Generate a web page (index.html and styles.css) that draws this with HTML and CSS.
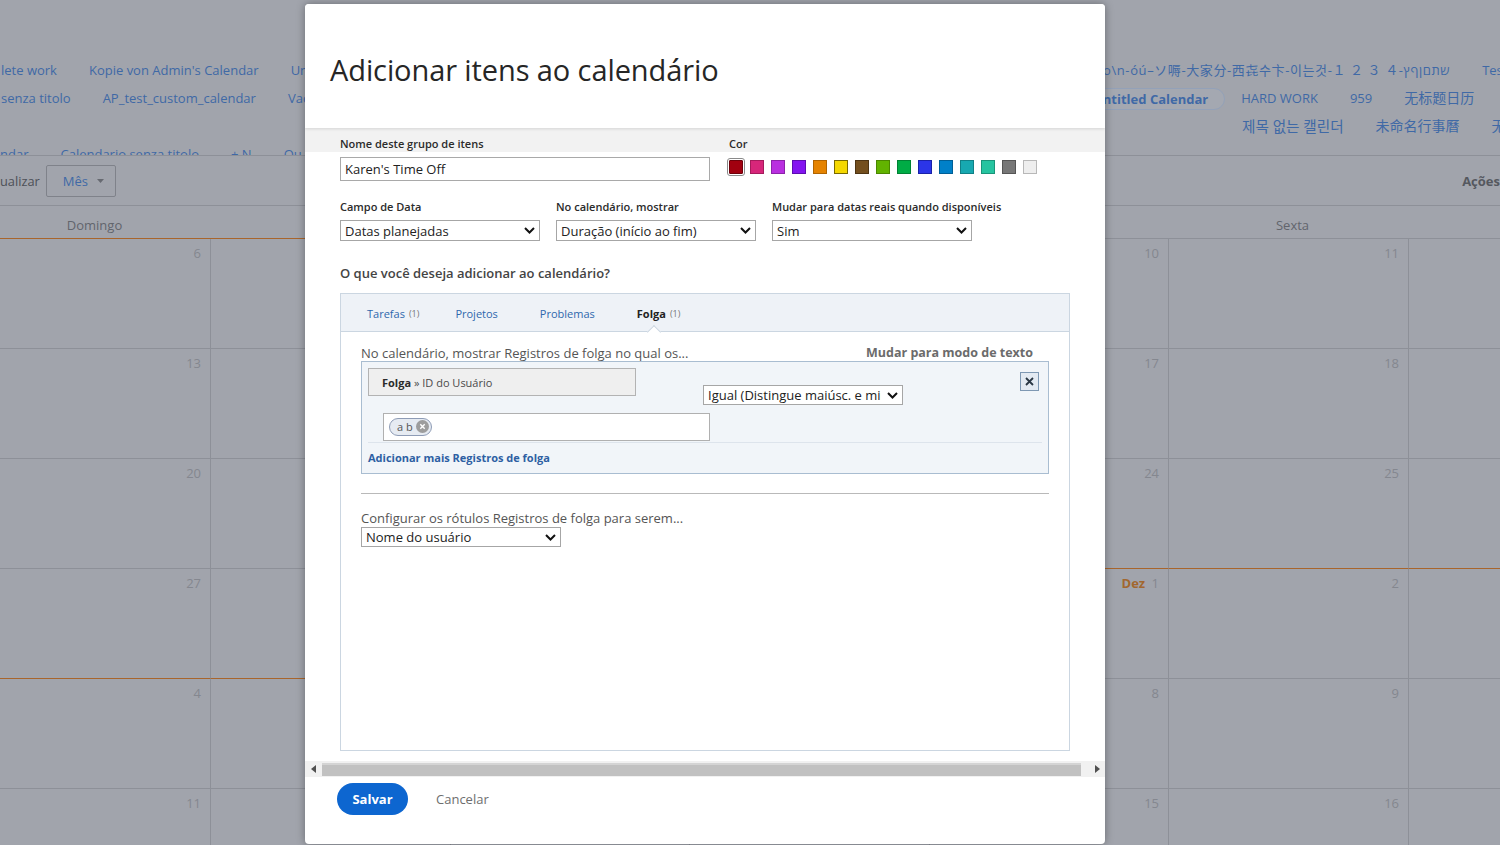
FILE: index.html
```html
<!DOCTYPE html>
<html lang="pt">
<head>
<meta charset="utf-8">
<title>Calendário</title>
<link rel="stylesheet" href="styles.css">
</head>
<body>
<div class="page">
  <div class="cal-links">
    <div class="links-row">
      <div class="links-left w1">
        <span class="cal-link first">lete work</span>
        <span class="cal-link">Kopie von Admin's Calendar</span>
        <span class="cal-link">Untitled</span>
      </div>
      <div class="links-right">
        <span class="cal-link wide">o\n-óú–ソ嗕-大家分-西㐂수卞-이는것-１ ２ ３ ４-שתםןףץ</span>
        <span class="cal-link">Test</span>
      </div>
    </div>
    <div class="links-row">
      <div class="links-left w2">
        <span class="cal-link first">senza titolo</span>
        <span class="cal-link">AP_test_custom_calendar</span>
        <span class="cal-link">Vacation</span>
      </div>
      <div class="links-right">
        <span class="cal-link active">Untitled Calendar</span>
        <span class="cal-link">HARD WORK</span>
        <span class="cal-link">959</span>
        <span class="cal-link cjk">无标题日历</span>
      </div>
    </div>
    <div class="links-row">
      <div class="links-left w3"></div>
      <div class="links-right">
        <span class="cal-link cjk ko">제목 없는 캘린더</span>
        <span class="cal-link cjk">未命名行事曆</span>
        <span class="cal-link cjk">无标题</span>
      </div>
    </div>
    <div class="links-row">
      <div class="links-left">
        <span class="cal-link zero">ndar</span>
        <span class="cal-link">Calendario senza titolo</span>
        <span class="cal-link">+ N</span>
        <span class="cal-link">Ou</span>
      </div>
    </div>
  </div>

  <div class="toolbar">
    <span class="tool-label">ualizar</span>
    <span class="view-btn">Mês <svg class="caret" width="7" height="4" viewBox="0 0 7 4"><path d="M0 0h7L3.5 4z" fill="#676a71"/></svg></span>
    <span class="actions">Ações</span>
  </div>

  <div class="cal-grid">
    <div class="dayname orange">Domingo</div>
    <div class="dayname orange"></div>
    <div class="dayname"></div>
    <div class="dayname"></div>
    <div class="dayname"></div>
    <div class="dayname">Sexta</div>
    <div class="dayname">Sábado</div>

    <div class="cell">6</div><div class="cell"></div><div class="cell"></div><div class="cell"></div><div class="cell">10</div><div class="cell">11</div><div class="cell">12</div>
    <div class="cell">13</div><div class="cell"></div><div class="cell"></div><div class="cell"></div><div class="cell">17</div><div class="cell">18</div><div class="cell">19</div>
    <div class="cell">20</div><div class="cell"></div><div class="cell"></div><div class="cell"></div><div class="cell orange">24</div><div class="cell orange">25</div><div class="cell orange">26</div>
    <div class="cell orange">27</div><div class="cell orange"></div><div class="cell orange"></div><div class="cell orange orange-right"></div><div class="cell"><span class="month">Dez</span> 1</div><div class="cell">2</div><div class="cell">3</div>
    <div class="cell">4</div><div class="cell"></div><div class="cell"></div><div class="cell"></div><div class="cell">8</div><div class="cell">9</div><div class="cell">10</div>
    <div class="cell">11</div><div class="cell"></div><div class="cell"></div><div class="cell"></div><div class="cell">15</div><div class="cell">16</div><div class="cell">17</div>
  </div>
</div>

<div class="modal">
  <div class="modal-head">
    <h1 class="modal-title">Adicionar itens ao calendário</h1>
  </div>

  <div class="modal-body">
    <div class="form-row">
      <div class="field name-field">
        <label class="field-label">Nome deste grupo de itens</label>
        <input class="text-input" type="text" value="Karen's Time Off">
      </div>
      <div class="field color-field">
        <span class="field-label">Cor</span>
        <div class="swatches">
          <span class="swatch selected" style="background:#a1000f;border-color:#6e000a"></span>
          <span class="swatch" style="background:#d7267a;border-color:#a51b5c"></span>
          <span class="swatch" style="background:#b92fe0;border-color:#8c22aa"></span>
          <span class="swatch" style="background:#8314f0;border-color:#5c0db0"></span>
          <span class="swatch" style="background:#e58300;border-color:#b06400"></span>
          <span class="swatch" style="background:#f5d800;border-color:#7a6a00"></span>
          <span class="swatch" style="background:#744f1e;border-color:#4d3413"></span>
          <span class="swatch" style="background:#62b300;border-color:#4a8700"></span>
          <span class="swatch" style="background:#00ac45;border-color:#008234"></span>
          <span class="swatch" style="background:#2b35e8;border-color:#1a22a8"></span>
          <span class="swatch" style="background:#0080c8;border-color:#005f96"></span>
          <span class="swatch" style="background:#17a8b0;border-color:#108086"></span>
          <span class="swatch" style="background:#26c4a0;border-color:#1a9479"></span>
          <span class="swatch" style="background:#777777;border-color:#555555"></span>
          <span class="swatch" style="background:#eeeeee;border-color:#b8b8b8"></span>
        </div>
      </div>
    </div>

    <div class="form-row row2">
      <div class="field w200">
        <span class="field-label">Campo de Data</span>
        <div class="select"><span class="select-text">Datas planejadas</span><svg class="chev" width="11" height="7" viewBox="0 0 11 7"><path d="M1 1l4.5 4.5L10 1" fill="none" stroke="#111" stroke-width="2"/></svg></div>
      </div>
      <div class="field w200">
        <span class="field-label">No calendário, mostrar</span>
        <div class="select"><span class="select-text">Duração (início ao fim)</span><svg class="chev" width="11" height="7" viewBox="0 0 11 7"><path d="M1 1l4.5 4.5L10 1" fill="none" stroke="#111" stroke-width="2"/></svg></div>
      </div>
      <div class="field">
        <span class="field-label">Mudar para datas reais quando disponíveis</span>
        <div class="select w200"><span class="select-text">Sim</span><svg class="chev" width="11" height="7" viewBox="0 0 11 7"><path d="M1 1l4.5 4.5L10 1" fill="none" stroke="#111" stroke-width="2"/></svg></div>
      </div>
    </div>

    <h2 class="question">O que você deseja adicionar ao calendário?</h2>

    <div class="tabs-panel">
      <div class="tab-bar">
        <span class="tab t1">Tarefas <span class="count">(1)</span></span>
        <span class="tab t2">Projetos</span>
        <span class="tab t3">Problemas</span>
        <span class="tab active">Folga <span class="count">(1)</span><span class="notch"></span></span>
      </div>

      <div class="tab-content">
        <div class="filter-head">
          <span class="filter-intro">No calendário, mostrar Registros de folga no qual os...</span>
          <span class="text-mode">Mudar para modo de texto</span>
        </div>

        <div class="filter-box">
          <div class="filter-line">
            <div class="field-box"><b>Folga</b>&nbsp;» ID do Usuário</div>
            <div class="select op-select"><span class="select-text">Igual (Distingue maiúsc. e minúsc.)</span><svg class="chev" width="11" height="7" viewBox="0 0 11 7"><path d="M1 1l4.5 4.5L10 1" fill="none" stroke="#111" stroke-width="2"/></svg></div>
            <span class="close-btn"><svg width="9" height="9" viewBox="0 0 9 9"><path d="M1 1l7 7M8 1L1 8" stroke="#2a3744" stroke-width="1.8"/></svg></span>
          </div>
          <div class="value-input">
            <span class="chip">a b <svg width="13" height="13" viewBox="0 0 13 13"><circle cx="6.5" cy="6.5" r="6.5" fill="#9d9d9d"/><path d="M4.3 4.3l4.4 4.4M8.7 4.3l-4.4 4.4" stroke="#fff" stroke-width="1.4"/></svg></span>
          </div>
          <div class="filter-sep"></div>
          <div class="add-more">Adicionar mais Registros de folga</div>
        </div>

        <div class="divider"></div>

        <div class="labels-note">Configurar os rótulos Registros de folga para serem...</div>
        <div class="select label-select"><span class="select-text">Nome do usuário</span><svg class="chev" width="11" height="7" viewBox="0 0 11 7"><path d="M1 1l4.5 4.5L10 1" fill="none" stroke="#111" stroke-width="2"/></svg></div>
      </div>
    </div>
  </div>

  <div class="hscroll">
    <span class="arrow-box"><svg width="5" height="8" viewBox="0 0 5 8"><path d="M5 0v8L0 4z" fill="#505050"/></svg></span>
    <span class="thumb"></span>
    <span class="arrow-box right"><svg width="5" height="8" viewBox="0 0 5 8"><path d="M0 0v8l5-4z" fill="#505050"/></svg></span>
  </div>

  <div class="modal-foot">
    <button class="btn-save" type="button">Salvar</button>
    <span class="btn-cancel">Cancelar</span>
  </div>
</div>
</body>
</html>
```

FILE: styles.css
```css
* { box-sizing: border-box; }
html, body { margin: 0; padding: 0; }
body {
  width: 1500px;
  height: 845px;
  overflow: hidden;
  position: relative;
  background: #a1a4ac;
  font-family: "Open Sans", "Noto Sans CJK SC", sans-serif;
  font-size: 13px;
  color: #333;
}

/* ---------- background calendar page ---------- */
.page { width: 1500px; height: 845px; overflow: hidden; }

.cal-links {
  height: 156px;
  overflow: hidden;
  padding-top: 56px;
  border-bottom: 1px solid #8d9098;
}
.links-row { display: flex; height: 28px; line-height: 28px; white-space: nowrap; }
.links-left { flex: none; display: flex; }
.links-left.w1 { width: 1087px; }
.links-left.w2 { width: 1076px; }
.links-left.w3 { width: 1226px; }
.links-right { display: flex; flex: none; }
.cal-link {
  color: #3f69a6;
  padding: 0 16px;
  font-family: "Open Sans", "Noto Sans CJK SC", "Noto Sans CJK KR", "DejaVu Sans", sans-serif;
  font-size: 13px;
}
.cal-link.first { padding-left: 1px; }
.cal-link.zero { padding-left: 0; }
.cal-link.wide { letter-spacing: 0.6px; }
.cal-link.cjk { font-size: 14px; }
.cal-link.cjk.ko { font-size: 14.6px; }
.cal-link.active {
  font-weight: 700;
  height: 22px;
  line-height: 20px;
  margin-top: 4px;
  border: 1px solid #93a1b8;
  border-radius: 12px;
  background: #a4a8b1;
}

.toolbar {
  height: 50px;
  display: flex;
  align-items: center;
  border-bottom: 1px solid #8d9098;
  color: #4d5057;
}
.tool-label { font-size: 12.8px; }
.view-btn {
  margin-left: 6px;
  width: 70px;
  height: 32px;
  border: 1px solid #7f828a;
  border-radius: 2px;
  color: #3f69a6;
  display: flex;
  align-items: center;
  padding-left: 16px;
  gap: 9px;
}
.caret { display: block; }
.actions { margin-left: auto; font-weight: 700; color: #55585f; }

.cal-grid {
  display: grid;
  grid-template-columns: 240px 240px 239px 240px 239px 240px 240px;
  margin-left: -29px;
  width: 1678px;
}
.dayname {
  height: 33px;
  border-bottom: 1px solid #8d9098;
  text-align: center;
  line-height: 16px;
  padding-top: 11px;
  padding-left: 7px;
  color: #62656c;
}
.dayname.orange { border-bottom-color: #a8652c; }
.cell {
  height: 110px;
  border-right: 1px solid #8d9098;
  border-bottom: 1px solid #8d9098;
  text-align: right;
  padding: 6px 9px 0 0;
  line-height: 16px;
  color: #84878f;
}
.cell.orange { border-bottom-color: #a8652c; }
.cell.orange-right { border-right-color: #a8652c; }
.month { color: #a2672f; font-weight: 700; margin-right: 3px; }

/* ---------- modal ---------- */
.modal {
  position: absolute;
  left: 305px;
  top: 4px;
  width: 800px;
  height: 840px;
  background: #fff;
  border-radius: 4px;
  box-shadow: 0 0 8px rgba(0, 0, 0, 0.35);
  display: flex;
  flex-direction: column;
  overflow: hidden;
}
.modal-head {
  flex: none;
  height: 124px;
  padding: 46px 0 0 25px;
  background: #fff;
  position: relative;
  z-index: 1;
  box-shadow: 0 1px 3px rgba(0, 0, 0, 0.13);
}
.modal-title {
  margin: 0;
  font-size: 29px;
  font-weight: 500;
  line-height: 40px;
  color: #262626;
  letter-spacing: -0.1px;
}

.modal-body {
  flex: none;
  height: 633px;
  overflow: hidden;
  padding: 9px 35px 0;
  background: linear-gradient(#f2f2f2 0, #f2f2f2 24px, #fff 24px);
}

.form-row { display: flex; gap: 16px; }
.form-row.row2 { margin-top: 19px; }
.field-label {
  display: block;
  font-size: 11px;
  font-weight: 600;
  line-height: 14px;
  color: #2b2b2b;
  margin-bottom: 6px;
  white-space: nowrap;
}
.text-input {
  display: block;
  width: 370px;
  height: 24px;
  border: 1px solid #a9a9a9;
  border-radius: 0;
  padding: 0 4px;
  font-family: "Open Sans", sans-serif;
  font-size: 13px;
  color: #222;
  outline: none;
}
.color-field { padding-left: 3px; }
.swatches { display: flex; gap: 7px; padding-top: 3px; }
.swatch {
  width: 14px;
  height: 14px;
  border: 1px solid;
  display: block;
  flex: none;
}
.swatch.selected {
  outline: 1px solid #8a8a8a;
  outline-offset: 1px;
  border-radius: 1px;
}
.w200 { width: 200px; }

.select {
  display: flex;
  align-items: center;
  width: 200px;
  height: 21px;
  border: 1px solid #a6a6a6;
  background: #fff;
  padding: 0 4px 0 4px;
  font-size: 13px;
  color: #222;
  white-space: nowrap;
  overflow: hidden;
}
.select-text { flex: 1; overflow: hidden; line-height: 18px; }
.chev { flex: none; margin-left: 6px; }

.question {
  margin: 24px 0 12px;
  font-size: 13px;
  font-weight: 600;
  line-height: 16px;
  color: #444;
}

.tabs-panel {
  height: 458px;
  border: 1px solid #cbd6e1;
}
.tab-bar {
  height: 38px;
  background: #eef2f7;
  border-bottom: 1px solid #cbd6e1;
  display: flex;
  padding-left: 26px;
}
.tab {
  position: relative;
  display: flex;
  align-items: center;
  padding-top: 2px;
  font-size: 11px;
  color: #2f68ad;
  white-space: nowrap;
}
.tab.t1 { margin-right: 36px; }
.tab.t2 { margin-right: 42px; }
.tab.t3 { margin-right: 42px; }
.tab.active { font-weight: 700; color: #222; }
.count { font-size: 9px; font-weight: 400; color: #777; margin-left: 4px; }
.notch {
  position: absolute;
  left: 12px;
  bottom: -6px;
  width: 10px;
  height: 10px;
  background: #fff;
  border-top: 1px solid #cbd6e1;
  border-left: 1px solid #cbd6e1;
  transform: rotate(45deg);
}

.tab-content { padding: 13px 20px 0; }
.filter-head {
  display: flex;
  justify-content: space-between;
  line-height: 16px;
}
.filter-intro { color: #555; }
.text-mode { font-size: 12.5px; font-weight: 700; color: #6b6b6b; padding-right: 16px; }

.filter-box {
  border: 1px solid #a9bdd1;
  background: #f1f5f9;
  padding: 6px 6px 0;
}
.filter-line { display: flex; align-items: flex-start; height: 37px; }
.field-box {
  width: 268px;
  height: 28px;
  border: 1px solid #b3b3b3;
  background: #efefef;
  padding-left: 13px;
  display: flex;
  align-items: center;
  font-size: 11px;
  color: #4a4a4a;
}
.field-box b { color: #2b2b2b; }
.op-select { margin: 17px 0 0 67px; height: 20px; }
.close-btn {
  margin: 4px 3px 0 auto;
  width: 19px;
  height: 19px;
  border: 1px solid #7e98b3;
  background: #e3eaf2;
  display: flex;
  align-items: center;
  justify-content: center;
}
.close-btn svg { display: block; }
.value-input {
  margin: 8px 0 0 15px;
  width: 327px;
  height: 28px;
  border: 1px solid #b0b0b0;
  background: #fff;
  padding: 3px 5px;
}
.chip {
  display: inline-flex;
  align-items: center;
  gap: 3px;
  height: 18px;
  padding: 0 2px 0 7px;
  border: 1px solid #8e9cb6;
  border-radius: 9px;
  background: #e6ebf2;
  font-size: 11px;
  color: #555;
}
.chip svg { display: block; }
.filter-sep { margin-top: 1px; border-top: 1px solid #dde4ec; }
.add-more {
  height: 30px;
  line-height: 30px;
  font-size: 11px;
  font-weight: 700;
  color: #2d5fa3;
}

.divider { margin-top: 19px; border-top: 1px solid #b9b9b9; }
.labels-note { margin-top: 16px; line-height: 16px; color: #555; }
.label-select { margin-top: 1px; height: 20px; }

.hscroll {
  flex: none;
  height: 16px;
  background: #f1f1f1;
  display: flex;
  align-items: flex-start;
}
.arrow-box {
  width: 17px;
  height: 16px;
  display: flex;
  align-items: center;
  justify-content: center;
}
.arrow-box.right { margin-left: auto; width: 24px; justify-content: flex-end; padding-right: 5px; }
.thumb {
  width: 759px;
  height: 13px;
  margin-top: 2px;
  background: #c1c1c1;
  border-top: 2px solid #d4d4d4;
}

.modal-foot {
  flex: 1;
  display: flex;
  align-items: flex-start;
  gap: 28px;
  padding: 6px 32px 0;
}
.btn-save {
  width: 71px;
  height: 32px;
  border: none;
  border-radius: 16px;
  background: #0d66d0;
  color: #fff;
  font-family: "Open Sans", sans-serif;
  font-size: 13px;
  font-weight: 700;
  padding: 0;
}
.btn-cancel { line-height: 32px; color: #6e6e6e; }
```
